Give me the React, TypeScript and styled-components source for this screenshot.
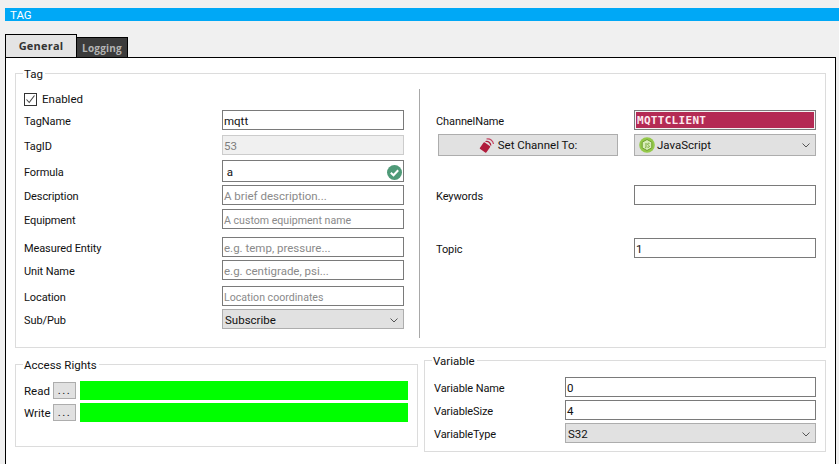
import { createGlobalStyle } from "styled-components";
import styled from "styled-components";

const GlobalStyle = createGlobalStyle`
  html, body {
    margin: 0;
    background: #f0f0f0;
  }
  body {
    width: 839px;
    height: 464px;
    overflow: hidden;
    font-family: Roboto, "Open Sans", "Liberation Sans", sans-serif;
    font-size: 11.5px;
    color: #111;
  }
`;

const Window = styled.div`
  padding: 8px 0 0 5px;
  height: 456px;
  display: flex;
  flex-direction: column;
`;

const TitleBar = styled.div`
  height: 13px;
  line-height: 14px;
  background: #00a8f6;
  color: #fff;
  padding-left: 5px;
  font-size: 11.5px;
`;

const TabStrip = styled.div`
  display: flex;
  align-items: flex-end;
  margin-top: 13px;
  height: 23px;
`;

const Tab = styled.div<{ $active?: boolean }>`
  box-sizing: border-box;
  height: ${(p) => (p.$active ? 24 : 21)}px;
  width: ${(p) => (p.$active ? 72 : 51)}px;
  margin-bottom: -1px;
  border: 1px solid #000;
  border-left-width: ${(p) => (p.$active ? 1 : 0)}px;
  border-bottom-width: 0;
  background: ${(p) => (p.$active ? "#e4e4e4" : "#3c3c3c")};
  color: ${(p) => (p.$active ? "#333" : "#b4b4b4")};
  font-family: "Open Sans", sans-serif;
  font-weight: 700;
  font-size: ${(p) => (p.$active ? 11 : 10)}px;
  letter-spacing: 0.2px;
  text-align: center;
  line-height: 21px;
`;

const Panel = styled.div`
  flex: 1;
  box-sizing: border-box;
  width: 831px;
  background: #fff;
  border: 1px solid #000;
  border-bottom: 0;
  padding: 8px 9px 0 9px;
  position: relative;
  z-index: 0;
`;

const Group = styled.fieldset<{ $w: number; $h: number }>`
  box-sizing: border-box;
  margin: 0;
  padding: 0;
  width: ${(p) => p.$w}px;
  height: ${(p) => p.$h}px;
  border: 1px solid #dcdcdc;
  min-inline-size: 0;
`;

const Legend = styled.legend<{ $left: number }>`
  margin-left: ${(p) => p.$left}px;
  padding: 2px 2px 0 1px;
  line-height: 12px;
`;

const TagBody = styled.div`
  display: grid;
  grid-template-columns: 404px 1fr;
  padding-top: 9px;
`;

const LeftColumn = styled.div`
  display: flex;
  flex-direction: column;
  padding-left: 8px;
  padding-right: 15px;
  border-right: 1px solid #a8a8a8;
  height: 249px;
`;

const RightColumn = styled.div`
  display: flex;
  flex-direction: column;
  padding-left: 16px;
  padding-right: 9px;
`;

const Row = styled.div<{ $top?: number; $h?: number; $col?: number }>`
  display: grid;
  grid-template-columns: ${(p) => p.$col ?? 198}px 1fr;
  align-items: center;
  margin-top: ${(p) => p.$top ?? 0}px;
  height: ${(p) => p.$h ?? 20}px;
`;

const Label = styled.span`
  white-space: nowrap;
  padding-top: 2px;
  font-size: 11px;
  letter-spacing: -0.1px;
`;

const CheckRow = styled.label`
  display: flex;
  align-items: center;
  gap: 5px;
  height: 14px;
  margin-top: 3px;
`;

const CheckBox = styled.span`
  box-sizing: border-box;
  width: 13px;
  height: 13px;
  border: 1px solid #333;
  display: flex;
  align-items: center;
  justify-content: center;
`;

const Field = styled.div<{ $disabled?: boolean; $h?: number }>`
  box-sizing: border-box;
  height: ${(p) => p.$h ?? 20}px;
  border: 1px solid ${(p) => (p.$disabled ? "#cccccc" : "#7a7a7a")};
  background: ${(p) => (p.$disabled ? "#f0f0f0" : "#fff")};
  color: ${(p) => (p.$disabled ? "#7d7d7d" : "#111")};
  padding: 2px 1px 0;
  display: flex;
  align-items: center;
  justify-content: space-between;
  white-space: nowrap;
`;

const Hint = styled.span<{ $small?: boolean }>`
  color: #8a8a8a;
  font-size: ${(p) => (p.$small ? 10.6 : 11.5)}px;
`;

const ChannelField = styled(Field)`
  background: #b42a54;
  box-shadow: inset 0 0 0 1px #f4f4f4;
  color: #fde8ee;
  padding: 0 2px;
  font-family: "DejaVu Sans Mono", "Liberation Mono", monospace;
  font-weight: 700;
  font-size: 11px;
  letter-spacing: 0.3px;
`;

const Combo = styled.div<{ $tall?: boolean }>`
  box-sizing: border-box;
  height: ${(p) => (p.$tall ? 22 : 20)}px;
  background: #e1e1e1;
  border: 1px solid #adadad;
  padding: ${(p) => (p.$tall ? 0 : 2)}px 5px 0 2px;
  display: flex;
  align-items: center;
  justify-content: space-between;
`;

const ComboValue = styled.span`
  display: flex;
  align-items: center;
  gap: 2px;
  padding-left: 2px;
`;

const SetButton = styled.div`
  box-sizing: border-box;
  height: 22px;
  width: 180px;
  margin-left: 2px;
  background: #e1e1e1;
  border: 1px solid #adadad;
  display: flex;
  align-items: center;
  justify-content: center;
  gap: 3px;
`;

const BottomRow = styled.div`
  display: grid;
  grid-template-columns: 403px 402px;
  column-gap: 6px;
  align-items: start;
  margin-top: 5px;
`;

const AccessGroup = styled(Group)`
  margin-top: 4px;
`;

const AccessBody = styled.div`
  display: flex;
  flex-direction: column;
  gap: 3px;
  padding: 10px 9px 0 8px;
`;

const AccessRow = styled.div`
  display: flex;
  align-items: center;
  height: 19px;
`;

const AccessLabel = styled.span`
  width: 29px;
  flex: none;
`;

const DotsButton = styled.div`
  box-sizing: border-box;
  width: 23px;
  height: 17px;
  flex: none;
  background: #e1e1e1;
  border: 1px solid #adadad;
  text-align: center;
  line-height: 15px;
  letter-spacing: 1.5px;
  margin-right: 4px;
`;

const GreenBar = styled.div`
  flex: 1;
  height: 19px;
  background: #00ff00;
`;

const VariableBody = styled.div`
  display: flex;
  flex-direction: column;
  gap: 3px;
  padding: 10px 9px 0 9px;
`;

const Chevron = () => (
  <svg width="8" height="5" viewBox="0 0 8 5" fill="none">
    <path d="M0.5 0.5 4 4 7.500 0.500" stroke="#555" strokeWidth="1" />
  </svg>
);

const Tick = () => (
  <svg width="11" height="11" viewBox="0 0 11 11" fill="none">
    <path d="M1.500 5.500 4.200 8.500 9.500 1.500" stroke="#444" strokeWidth="1.100" />
  </svg>
);

const OkBadge = () => (
  <svg width="15" height="15" viewBox="0 0 15 15">
    <circle cx="7.500" cy="7.500" r="7.500" fill="#4f9a78" />
    <path d="M3.800 7.800 6.500 10.300 11.200 5.200" fill="none" stroke="#fff" strokeWidth="2" />
  </svg>
);

const SignalIcon = () => (
  <svg width="16" height="16" viewBox="0 0 16 16" fill="none">
    <rect x="2" y="6.500" width="8" height="8" rx="1" transform="rotate(35 6 10.500)" fill="#b01c3c" />
    <path d="M6.500 4.500c2.800-.8 5 1.200 5.300 4" stroke="#b01c3c" strokeWidth="1.300" />
    <path d="M7.500 2c3.600-.8 6.500 1.600 7 5" stroke="#c4405e" strokeWidth="1.200" />
  </svg>
);

const NodeIcon = () => (
  <svg width="16" height="16" viewBox="0 0 16 16">
    <circle cx="8" cy="8" r="7.800" fill="#94c94a" />
    <path d="M8 2.500 12.800 5.200V10.800L8 13.500 3.200 10.800V5.200Z" fill="#d8edb8" stroke="#6f9f30" strokeWidth="1" />
    <path d="M7 6V10.200Q7 11 6 10.800M10.500 6.500Q9 5.800 8.600 6.800 8.400 7.800 9.500 8.200 10.800 8.800 10.200 9.900 9.500 10.800 8.300 10" fill="none" stroke="#6f9f30" strokeWidth="0.900" />
  </svg>
);

export default function App() {
  return (
    <>
      <GlobalStyle />
      <Window>
        <TitleBar>TAG</TitleBar>
        <TabStrip>
          <Tab $active>General</Tab>
          <Tab>Logging</Tab>
        </TabStrip>
        <Panel>
          <Group $w={811} $h={282}>
            <Legend $left={7}>Tag</Legend>
            <TagBody>
              <LeftColumn>
                <CheckRow>
                  <CheckBox>
                    <Tick />
                  </CheckBox>
                  Enabled
                </CheckRow>
                <Row $top={4}>
                  <Label>TagName</Label>
                  <Field>mqtt</Field>
                </Row>
                <Row $top={5}>
                  <Label>TagID</Label>
                  <Field $disabled>53</Field>
                </Row>
                <Row $top={5} $h={22}>
                  <Label>Formula</Label>
                  <Field $h={22}>
                    &nbsp;a
                    <OkBadge />
                  </Field>
                </Row>
                <Row $top={3}>
                  <Label>Description</Label>
                  <Field>
                    <Hint>A brief description...</Hint>
                  </Field>
                </Row>
                <Row $top={4}>
                  <Label>Equipment</Label>
                  <Field>
                    <Hint $small>A custom equipment name</Hint>
                  </Field>
                </Row>
                <Row $top={8}>
                  <Label>Measured Entity</Label>
                  <Field>
                    <Hint>e.g. temp, pressure...</Hint>
                  </Field>
                </Row>
                <Row $top={3}>
                  <Label>Unit Name</Label>
                  <Field>
                    <Hint>e.g. centigrade, psi...</Hint>
                  </Field>
                </Row>
                <Row $top={6}>
                  <Label>Location</Label>
                  <Field>
                    <Hint $small>Location coordinates</Hint>
                  </Field>
                </Row>
                <Row $top={3}>
                  <Label>Sub/Pub</Label>
                  <Combo>
                    Subscribe
                    <Chevron />
                  </Combo>
                </Row>
              </LeftColumn>
              <RightColumn>
                <Row $top={21}>
                  <Label>ChannelName</Label>
                  <ChannelField>MQTTCLIENT</ChannelField>
                </Row>
                <Row $top={4} $h={22}>
                  <SetButton>
                    <SignalIcon />
                    Set Channel To:
                  </SetButton>
                  <Combo $tall>
                    <ComboValue>
                      <NodeIcon />
                      JavaScript
                    </ComboValue>
                    <Chevron />
                  </Combo>
                </Row>
                <Row $top={29}>
                  <Label>Keywords</Label>
                  <Field />
                </Row>
                <Row $top={33}>
                  <Label>Topic</Label>
                  <Field>1</Field>
                </Row>
              </RightColumn>
            </TagBody>
          </Group>
          <BottomRow>
            <AccessGroup $w={403} $h={90}>
              <Legend $left={7}>Access Rights</Legend>
              <AccessBody>
                <AccessRow>
                  <AccessLabel>Read</AccessLabel>
                  <DotsButton>...</DotsButton>
                  <GreenBar />
                </AccessRow>
                <AccessRow>
                  <AccessLabel>Write</AccessLabel>
                  <DotsButton>...</DotsButton>
                  <GreenBar />
                </AccessRow>
              </AccessBody>
            </AccessGroup>
            <Group $w={402} $h={99}>
              <Legend $left={7}>Variable</Legend>
              <VariableBody>
                <Row $col={131}>
                  <Label>Variable Name</Label>
                  <Field>0</Field>
                </Row>
                <Row $col={131}>
                  <Label>VariableSize</Label>
                  <Field>4</Field>
                </Row>
                <Row $col={131}>
                  <Label>VariableType</Label>
                  <Combo>
                    S32
                    <Chevron />
                  </Combo>
                </Row>
              </VariableBody>
            </Group>
          </BottomRow>
        </Panel>
      </Window>
    </>
  );
}
